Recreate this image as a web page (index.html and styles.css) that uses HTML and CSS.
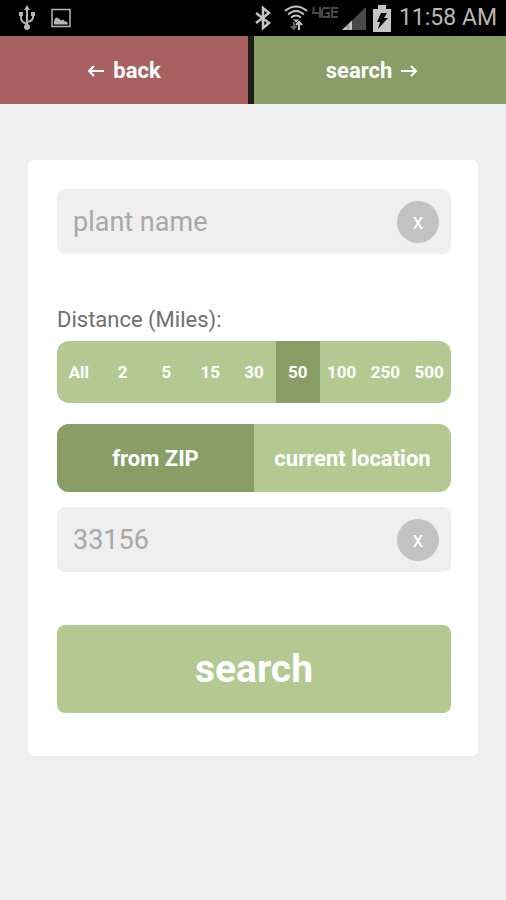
FILE: index.html
```html
<!DOCTYPE html>
<html lang="en">
<head>
<meta charset="utf-8">
<meta name="viewport" content="width=device-width, initial-scale=1">
<title>Plant search</title>
<link rel="stylesheet" href="styles.css">
</head>
<body>
<header class="status">
  <div class="status-left">
    <svg width="18" height="26" viewBox="0 0 18 26" fill="none" stroke="#b4b4b4" stroke-width="2" aria-hidden="true">
      <path d="M9 4v18M3 9v4q0 4 6 6M15 9v3q0 4-6 5"/>
      <path d="M9 0l3 5H6zM1 7h4v4H1zM13 7h4v4h-4z" fill="#b4b4b4" stroke="none"/>
      <circle cx="9" cy="22" r="3" fill="#b4b4b4" stroke="none"/>
    </svg>
    <svg width="20" height="20" viewBox="0 0 20 20" aria-hidden="true">
      <path d="M1 1.500h18v17H1z" fill="none" stroke="#b4b4b4" stroke-width="1.500"/>
      <path d="M3 16.500v-3l1-3 2-1 3 2 1 1 2-1 2 2h2l1 3z" fill="#b4b4b4"/>
    </svg>
  </div>
  <div class="status-right">
    <svg width="16" height="26" viewBox="0 0 16 26" fill="none" stroke="#c4c4c4" stroke-width="2.500" aria-hidden="true">
      <path d="M1 8l13 10-6 5V3l6 5L1 18"/>
    </svg>
    <svg class="wifi" width="24" height="26" viewBox="0 0 24 26" fill="none" stroke="#c4c4c4" stroke-width="2" aria-hidden="true">
      <path d="M1 6q11-9 22 0M4 9.500q8-7 16 0M7 12.500q5-4 10 0"/>
      <path d="M9 14.500h6l-3 3z" fill="#c4c4c4" stroke="none"/>
      <path d="M15 25v-7M12 20l3-3 3 3"/>
      <path d="M10 17v7M7 21l3 3 2-3" stroke="#666"/>
    </svg>
    <svg class="lte" width="26" height="26" viewBox="0 0 26 26" fill="none" stroke="#484848" stroke-width="2" aria-hidden="true">
      <path d="M2 2L1 8h7M8 2v11M18 3h-6l-2 2v6l1 1h6V8h-3M26 3h-6v4M26 7h-6M20 7v5h6"/>
    </svg>
    <svg width="24" height="26" viewBox="0 0 24 26" aria-hidden="true">
      <path d="M0 25L24 2v23z" fill="#4a4a4a"/>
      <path d="M0 25l10-9.500V25z" fill="#c4c4c4"/>
      <path d="M6 19v6" stroke="#777"/>
    </svg>
    <svg class="battery" width="18" height="27" viewBox="0 0 18 27" aria-hidden="true">
      <path d="M5 0h8v4h5v23H0V4h5z" fill="#c4c4c4"/>
      <path d="M8 8h6l-3 5h4L5 24l2-7H4z" fill="#000"/>
    </svg>
    <time class="clock">11:58 AM</time>
  </div>
</header>
<nav class="nav">
  <a class="nav-link back" href="#back">
    <svg class="arrow" width="18" height="14" viewBox="0 0 18 14" aria-hidden="true"><path d="M17 8H2M7 3L2 8l5 5"/></svg>
    back
  </a>
  <a class="nav-link find" href="#results">
    search
    <svg class="arrow" width="18" height="14" viewBox="0 0 18 14" aria-hidden="true"><path d="M1 8h15M11 3l5 5-5 5"/></svg>
  </a>
</nav>
<main>
  <form class="card">
    <div class="field">
      <input class="field-input" type="text" placeholder="plant name" aria-label="plant name">
      <button class="clear" type="button" aria-label="Clear plant name">x</button>
    </div>
    <div class="label" id="distance">Distance (Miles):</div>
    <div class="segments distances" role="group" aria-labelledby="distance">
      <button type="button">All</button>
      <button type="button">2</button>
      <button type="button">5</button>
      <button type="button">15</button>
      <button type="button">30</button>
      <button type="button" aria-pressed="true">50</button>
      <button type="button">100</button>
      <button type="button">250</button>
      <button type="button">500</button>
    </div>
    <div class="segments origins" role="group" aria-label="Search from">
      <button type="button" aria-pressed="true">from ZIP</button>
      <button type="button">current location</button>
    </div>
    <div class="field">
      <input class="field-input" type="text" inputmode="numeric" placeholder="33156" aria-label="ZIP code">
      <button class="clear" type="button" aria-label="Clear ZIP code">x</button>
    </div>
    <button class="submit" type="submit">search</button>
  </form>
</main>
</body>
</html>
```
FILE: styles.css
```css
* {
  box-sizing: border-box;
}

body {
  margin: 0;
  min-height: 100vh;
  background: #efefef;
  font-family: Roboto, "Liberation Sans", sans-serif;
}

button,
input {
  margin: 0;
  border: 0;
  padding: 0;
  font: inherit;
}

.status {
  display: flex;
  align-items: center;
  justify-content: space-between;
  height: 36px;
  padding: 0 9px 0 18px;
  background: #000;
}

.status-left,
.status-right {
  display: flex;
  align-items: center;
}

.status-left {
  gap: 15px;
}

.status-right {
  gap: 4px;
}

.wifi {
  margin-left: 9px;
}

.battery {
  margin: 0 4px 0 3px;
}

.clock {
  color: #b8b8b8;
  font-size: 23px;
  line-height: 36px;
}

.nav {
  display: grid;
  grid-template-columns: 248fr 252fr;
  gap: 6px;
  background: #1a1d1a;
}

.nav-link {
  display: flex;
  align-items: center;
  justify-content: center;
  gap: 8px;
  height: 68px;
  color: #fff;
  font-size: 22px;
  font-weight: 700;
  text-decoration: none;
}

.back {
  background: #a96060;
}

.find {
  padding-right: 16px;
  background: #889e66;
}

.arrow {
  fill: none;
  stroke: #fff;
  stroke-width: 2;
}

.card {
  display: flex;
  flex-direction: column;
  margin: 56px 28px;
  padding: 29px 27px 43px 29px;
  border-radius: 6px;
  background: #fff;
}

.field {
  display: flex;
  align-items: center;
  height: 65px;
  padding: 0 12px 0 16px;
  border-radius: 8px;
  background: #efefef;
}

.field-input {
  flex: 1;
  min-width: 0;
  background: transparent;
  color: #a8a8a8;
  font-size: 27px;
}

.field-input::placeholder {
  color: #a8a8a8;
}

.clear {
  width: 42px;
  height: 42px;
  border-radius: 50%;
  background: #c2c2c2;
  color: #fff;
  font-size: 22px;
}

.label {
  margin-top: 52px;
  color: #707070;
  font-size: 22px;
  line-height: 28px;
}

.segments {
  display: grid;
  grid-auto-columns: 1fr;
  grid-auto-flow: column;
  overflow: hidden;
  border-radius: 12px;
  background: #b4c992;
}

.segments button {
  background: transparent;
  color: #fff;
  font-weight: 700;
}

.segments [aria-pressed="true"] {
  background: #889e66;
}

.distances {
  height: 62px;
  margin-top: 7px;
  font-size: 17px;
}

.origins {
  height: 68px;
  margin: 21px 0 15px;
  font-size: 22px;
}

.submit {
  height: 88px;
  margin-top: 53px;
  border-radius: 8px;
  background: #b4c992;
  color: #fff;
  font-size: 39px;
  font-weight: 700;
}
```
